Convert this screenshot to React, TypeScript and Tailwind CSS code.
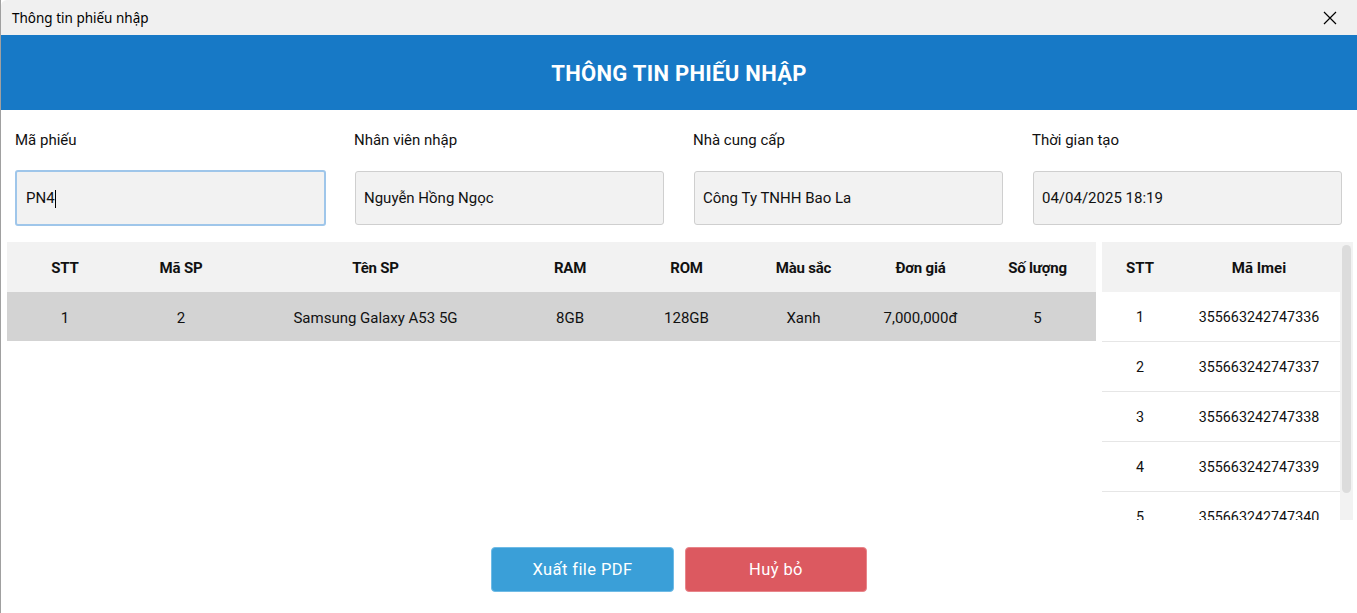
import React from "react";

const fields = [
  { label: "Mã phiếu", value: "PN4", focused: true },
  { label: "Nhân viên nhập", value: "Nguyễn Hồng Ngọc" },
  { label: "Nhà cung cấp", value: "Công Ty TNHH Bao La" },
  { label: "Thời gian tạo", value: "04/04/2025 18:19" },
];

const columns = [
  { title: "STT", w: "w-[116px]" },
  { title: "Mã SP", w: "w-[116px]" },
  { title: "Tên SP", w: "w-[273px]" },
  { title: "RAM", w: "w-[116px]" },
  { title: "ROM", w: "w-[117px]" },
  { title: "Màu sắc", w: "w-[117px]" },
  { title: "Đơn giá", w: "w-[117px]" },
  { title: "Số lượng", w: "w-[117px]" },
];

const products = [["1", "2", "Samsung Galaxy A53 5G", "8GB", "128GB", "Xanh", "7,000,000đ", "5"]];

const imeis = [
  "355663242747336",
  "355663242747337",
  "355663242747338",
  "355663242747339",
  "355663242747340",
  "355663242747341",
];

export default function App() {
  return (
    <div
      className="w-[1357px] h-[613px] bg-white border-l border-[#a0a0a0] overflow-hidden text-[#111] flex flex-col"
      style={{ fontFamily: "Roboto, 'Noto Sans', sans-serif" }}
    >
      {/* title bar */}
      <div className="h-[35px] shrink-0 bg-[#f0f0f0] flex items-center justify-between pl-[11px] pr-[20px] pt-[2px] rounded-tl-[6px]">
        <span className="text-[13.5px] text-black" style={{ fontFamily: "'Noto Sans', sans-serif" }}>
          Thông tin phiếu nhập
        </span>
        <svg width="14" height="14" viewBox="0 0 14 14" className="text-black -mt-[2px]">
          <path d="M1 1L13 13M13 1L1 13" stroke="currentColor" strokeWidth="1.2" />
        </svg>
      </div>

      {/* banner */}
      <div className="h-[75px] shrink-0 bg-[#1779c6] flex items-center justify-center pt-[2px]">
        <h1 className="text-white text-[22px] font-bold tracking-[0.3px]">THÔNG TIN PHIẾU NHẬP</h1>
      </div>

      {/* fields */}
      <div className="flex gap-[28px] pl-[14px] pt-[21px] shrink-0">
        {fields.map((f) => (
          <div key={f.label} className="w-[311px] flex flex-col">
            <label className="text-[15px] leading-[18px]">{f.label}</label>
            <div
              className={
                f.focused
                  ? "mt-[21px] h-[56px] w-[311px] rounded-[3px] border-2 border-[#9fc6ea] bg-[#f2f2f2] flex items-center pl-[9px] pt-[1px] text-[15px]"
                  : "mt-[22px] ml-[1px] h-[54px] w-[309px] rounded-[3px] border border-[#cfcfcf] bg-[#f2f2f2] flex items-center pl-[8px] pt-[1px] text-[15px]"
              }
            >
              <span>{f.value}</span>
              {f.focused && <span className="inline-block w-[1px] h-[18px] bg-black" />}
            </div>
          </div>
        ))}
      </div>

      {/* tables */}
      <div className="flex pt-[16px] pl-[6px] h-[294px] shrink-0">
        <div className="w-[1089px] flex flex-col">
          <div className="flex h-[50px] bg-[#f2f2f2] items-center pt-[2px]">
            {columns.map((c) => (
              <div key={c.title} className={`${c.w} text-center text-[15px] font-bold tracking-[-0.2px]`}>
                {c.title}
              </div>
            ))}
          </div>
          {products.map((row, i) => (
            <div key={i} className="flex h-[49px] bg-[#d3d3d3] items-center pt-[3px]">
              {row.map((cell, j) => (
                <div key={j} className={`${columns[j].w} text-center text-[15px]`}>
                  {cell}
                </div>
              ))}
            </div>
          ))}
        </div>

        <div className="ml-[6px] flex h-[278px]">
          <div className="w-[238px] overflow-hidden flex flex-col">
            <div className="flex h-[50px] shrink-0 bg-[#f2f2f2] items-center pt-[2px] text-[15px] font-bold">
              <div className="w-[76px] text-center">STT</div>
              <div className="w-[162px] text-center">Mã Imei</div>
            </div>
            {imeis.map((m, i) => (
              <div key={m} className="flex h-[50px] shrink-0 items-center pt-[3px] border-b border-[#e6e6e6] text-[14.3px]">
                <div className="w-[76px] text-center">{i + 1}</div>
                <div className="w-[162px] text-center">{m}</div>
              </div>
            ))}
          </div>
          <div className="w-[13px] h-[278px] bg-[#f2f2f2] pt-[3px] pl-[2px]">
            <div className="w-[9px] h-[248px] rounded-full bg-[#dcdcdc]" />
          </div>
        </div>
      </div>

      {/* buttons */}
      <div className="flex justify-center gap-[11px] pt-[27px]">
        <button className="w-[183px] h-[45px] rounded-[4px] border border-[#6fbbe6] bg-[#3a9fd8] text-white text-[16.5px] tracking-[0.4px] pt-[1px]">
          Xuất file PDF
        </button>
        <button className="w-[182px] h-[45px] rounded-[4px] border border-[#e8858a] bg-[#dc5960] text-white text-[16.5px] tracking-[0.4px] pt-[1px]">
          Huỷ bỏ
        </button>
      </div>
    </div>
  );
}
